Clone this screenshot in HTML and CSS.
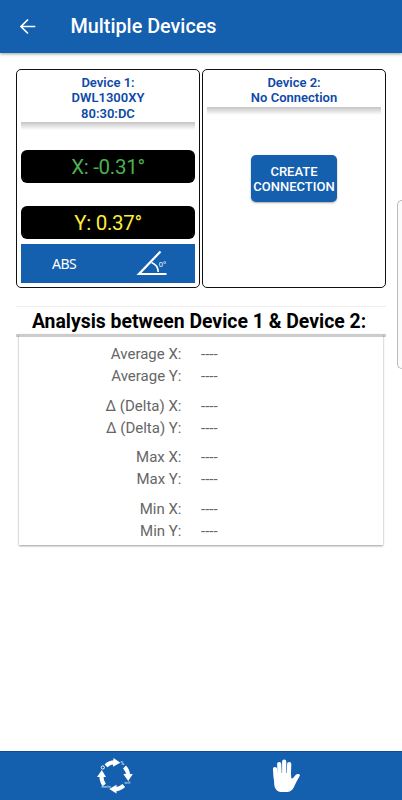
FILE: index.html
```html
<!DOCTYPE html>
<html lang="en">
<head>
  <meta charset="UTF-8" />
  <meta name="viewport" content="width=device-width, initial-scale=1.0"/>
  <title>Multiple Devices</title>
  <link rel="stylesheet" href="styles.css">
</head>
<body>

  <header class="app-bar">
    <svg class="back" width="16" height="16" viewBox="0 0 16 16">
      <path d="M15.3 7.5H1M8 .5L1 7.5l7 7" fill="none" stroke="#fff" stroke-width="1.6"/>
    </svg>
    <h1>Multiple Devices</h1>
  </header>

  <main>
    <div class="devices">
      <section class="device">
        <h2>Device 1:<br>DWL1300XY<br>80:30:DC</h2>
        <div class="reading reading-x">X: -0.31°</div>
        <div class="reading reading-y">Y: 0.37°</div>
        <div class="modes">
          <span class="abs">ABS</span>
          <svg class="angle" width="32" height="26" viewBox="0 0 32 26">
            <path d="M24.5 1.5L3 24H30.5" fill="none" stroke="#fff" stroke-width="2.2"/>
            <path d="M15.5 12.5Q22 15 22.2 22" fill="none" stroke="#fff" stroke-width="1.6"/>
            <text x="22.8" y="17.4" class="angle-text">0°</text>
          </svg>
        </div>
      </section>

      <section class="device">
        <h2>Device 2:<br>No Connection</h2>
        <button class="create">CREATE<br>CONNECTION</button>
      </section>
    </div>

    <h2 class="analysis-title">Analysis between Device 1 &amp; Device 2:</h2>
    <div class="analysis">
      <div class="pair">
        <span>Average X:</span><span class="value">----</span>
        <span>Average Y:</span><span class="value">----</span>
      </div>
      <div class="pair">
        <span>Δ (Delta) X:</span><span class="value">----</span>
        <span>Δ (Delta) Y:</span><span class="value">----</span>
      </div>
      <div class="pair">
        <span>Max X:</span><span class="value">----</span>
        <span>Max Y:</span><span class="value">----</span>
      </div>
      <div class="pair">
        <span>Min X:</span><span class="value">----</span>
        <span>Min Y:</span><span class="value">----</span>
      </div>
    </div>
  </main>

  <!-- edge panel handle -->
  <div class="edge-handle"></div>

  <footer class="bottom-bar">
    <svg class="cycle" width="36" height="36" viewBox="0 0 36 36">
      <g fill="none" stroke="#fff" stroke-width="4">
        <path d="M9 7.8Q12.5 4.3 17.5 4.3"/>
        <path d="M27.5 9Q31 12.5 31.1 17.5"/>
        <path d="M26.8 27.5Q23 31 18.5 31.3"/>
        <path d="M7.2 27Q4.3 23 4.5 18"/>
      </g>
      <g fill="#fff">
        <path d="M16.5 0l6.8 4.8L16 8.8z"/>
        <path d="M26.3 16h9.5L31.2 23z"/>
        <path d="M19.5 26.8v8.8L12.2 31z"/>
        <path d="M0 19h9L4.8 12z"/>
      </g>
      <circle cx="5.8" cy="9.5" r="1.6" fill="none" stroke="#fff"/>
      <text x="23.5" y="7" class="unit unit-percent">%</text>
      <text x="27.5" y="26.2" class="unit">in/ft</text>
      <text x="4.5" y="30" class="unit">mm/m</text>
    </svg>
    <svg class="hand" width="28" height="34" viewBox="0 0 28 34">
      <g fill="none" stroke="#fff" stroke-width="4.2" stroke-linecap="round">
        <path d="M3 10L3.8 20M7.2 5L7.8 18M12.2 2.5V18M17.2 5L16.8 18"/>
      </g>
      <path fill="#fff" d="M1.7 14h17.2l.4 5c.6.8 1.3.7 1.8.1l2.7-3.3c1.700-1.500 4.800-.6 3.900 1.200-2 3.200-3.600 6.600-5.600 10.700-1.800 3.700-4 5.400-8.500 5.400H10c-5 0-7.600-3.300-7.800-8.300z"/>
    </svg>
  </footer>

</body>
</html>
```

FILE: styles.css
```css
:root {
  --blue: #145fae;
  --title-blue: #0d4aa7;
}

* {
  box-sizing: border-box;
}

body {
  margin: 0;
  height: 800px;
  display: flex;
  flex-direction: column;
  background-color: #fff;
  font-family: Roboto, sans-serif;
  overflow: hidden;
}

h1, h2 {
  margin: 0;
  font-weight: 500;
}

.app-bar {
  height: 53px;
  display: flex;
  align-items: center;
  padding-left: 20px;
  background-color: var(--blue);
  box-shadow: 0 1px 3px rgba(0, 0, 0, 0.4);
  color: #fff;
}

.app-bar h1 {
  margin-left: 34.5px;
  font-size: 19.8px;
}

main {
  flex: 1;
  padding: 16px 16px 0;
}

.devices {
  display: grid;
  grid-template-columns: 184px 184px;
  gap: 2px;
}

.device {
  height: 219px;
  display: flex;
  flex-direction: column;
  padding: 5px 4px 4px;
  border: 1px solid #111;
  border-radius: 5px;
}

.device h2 {
  padding-bottom: 9px;
  background: linear-gradient(#c4c4c4, #fff) bottom / 100% 8px no-repeat;
  color: var(--title-blue);
  font-size: 13px;
  font-weight: 600;
  line-height: 15.3px;
  text-align: center;
}

.reading {
  height: 33px;
  border-radius: 6px;
  background-color: #000;
  font-size: 20.5px;
  letter-spacing: -0.3px;
  line-height: 35px;
  text-align: center;
}

.reading-x {
  margin-top: 20px;
  color: #4caf50;
}

.reading-y {
  margin-top: 23px;
  color: #ffeb3b;
}

.modes {
  height: 39px;
  margin-top: 5px;
  display: flex;
  align-items: center;
  background-color: var(--blue);
  color: #fff;
}

.abs {
  width: 24px;
  margin-left: 31px;
  font-family: "Noto Sans", sans-serif;
  font-size: 14px;
  letter-spacing: -0.5px;
}

.angle {
  margin-left: 60px;
}

.angle-text {
  fill: #fff;
  font-family: "Noto Sans", sans-serif;
  font-size: 7.5px;
}

.create {
  width: 86px;
  height: 47px;
  margin: 40px auto 0;
  padding: 1px 0 0;
  border: none;
  border-radius: 5px;
  background-color: var(--blue);
  box-shadow: 0 1px 2px rgba(0, 0, 0, 0.35);
  color: #fff;
  font: 500 13px/15px Roboto, sans-serif;
}

.analysis-title {
  height: 28px;
  margin-top: 18px;
  padding-right: 4px;
  border-top: 1px solid #eee;
  box-shadow: 0 3px 0 #ccc;
  color: #000;
  font-size: 19.4px;
  font-weight: 700;
  line-height: 29px;
  text-align: center;
  white-space: nowrap;
}

.analysis {
  height: 211px;
  margin: 0 3px;
  padding-top: 9px;
  box-shadow: 0 1px 2px rgba(0, 0, 0, 0.4);
  color: #666;
  font-size: 15px;
}

.pair {
  display: grid;
  grid-template-columns: 162.5px 1fr;
  column-gap: 19.5px;
  margin-bottom: 7.7px;
  line-height: 22px;
}

.pair span:nth-child(odd) {
  text-align: right;
}

.edge-handle {
  position: absolute;
  top: 200px;
  right: 0;
  width: 5px;
  height: 169px;
  border: 1px solid #bbb;
  border-right: none;
  border-radius: 5px 0 0 5px;
  background-color: #fbfbfb;
}

.bottom-bar {
  height: 49px;
  display: flex;
  align-items: center;
  border-top: 1px solid #0d4f9c;
  background-color: var(--blue);
}

.cycle {
  margin-left: 97px;
}

.hand {
  margin-left: 139px;
}

.unit {
  fill: #fff;
  font-size: 3px;
}

.unit-percent {
  font-size: 5px;
}
```
